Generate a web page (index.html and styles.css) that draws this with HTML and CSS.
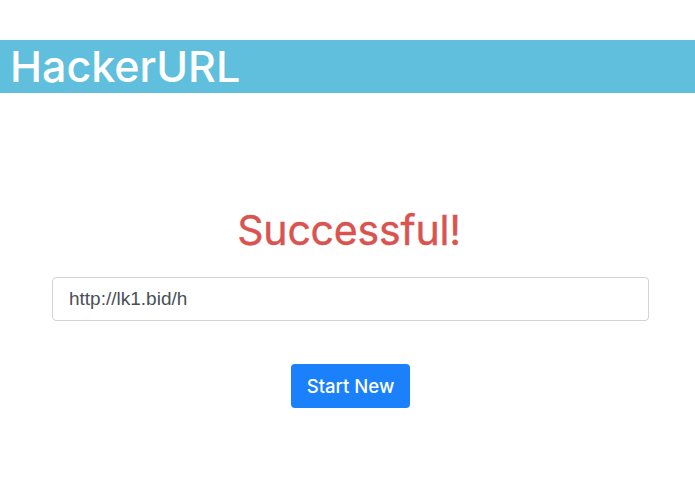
FILE: index.html
```html
<!DOCTYPE html>
<html>
<head>
<meta charset="utf-8">
<link rel="stylesheet" href="styles.css">
</head>
<body>
<header class="brand-bar">
  <h1 class="brand">HackerURL</h1>
</header>
<main class="content">
  <h2 class="title">Successful!</h2>
  <input class="url-field" type="text" value="http://lk1.bid/h" readonly>
  <button class="btn-new" type="button">Start New</button>
</main>
</body>
</html>
```

FILE: styles.css
```css
html, body {
  margin: 0;
  padding: 0;
  background: #fff;
  font-family: Inter, "Liberation Sans", sans-serif;
}
.brand-bar {
  margin-top: 40px;
  height: 53px;
  background: #60bfdc;
  display: flex;
  align-items: center;
  padding-left: 10px;
}
.brand {
  margin: 0;
  color: #fff;
  font-size: 43px;
  font-weight: 500;
  line-height: 1;
  letter-spacing: 0;
}
.content {
  display: flex;
  flex-direction: column;
  align-items: center;
  padding: 0 46px 0 52px;
}
.title {
  margin: 113px 0 0 -3px;
  color: #d9534f;
  font-size: 41px;
  font-weight: 400;
  line-height: 48px;
  letter-spacing: -0.2px;
  -webkit-text-stroke: 0.4px #d9534f;
}
.url-field {
  box-sizing: border-box;
  margin-top: 23px;
  width: 100%;
  height: 44px;
  padding: 0 16px;
  border: 1px solid #ced4da;
  border-radius: 4px;
  font-family: "Liberation Sans", sans-serif;
  font-size: 19px;
  color: #495057;
  outline: none;
}
.btn-new {
  margin-top: 43px;
  height: 44px;
  padding: 0 16px;
  border: none;
  border-radius: 4px;
  background: #1a80fb;
  color: #fff;
  font-family: inherit;
  font-size: 18.5px;
  font-weight: 500;
}
```
